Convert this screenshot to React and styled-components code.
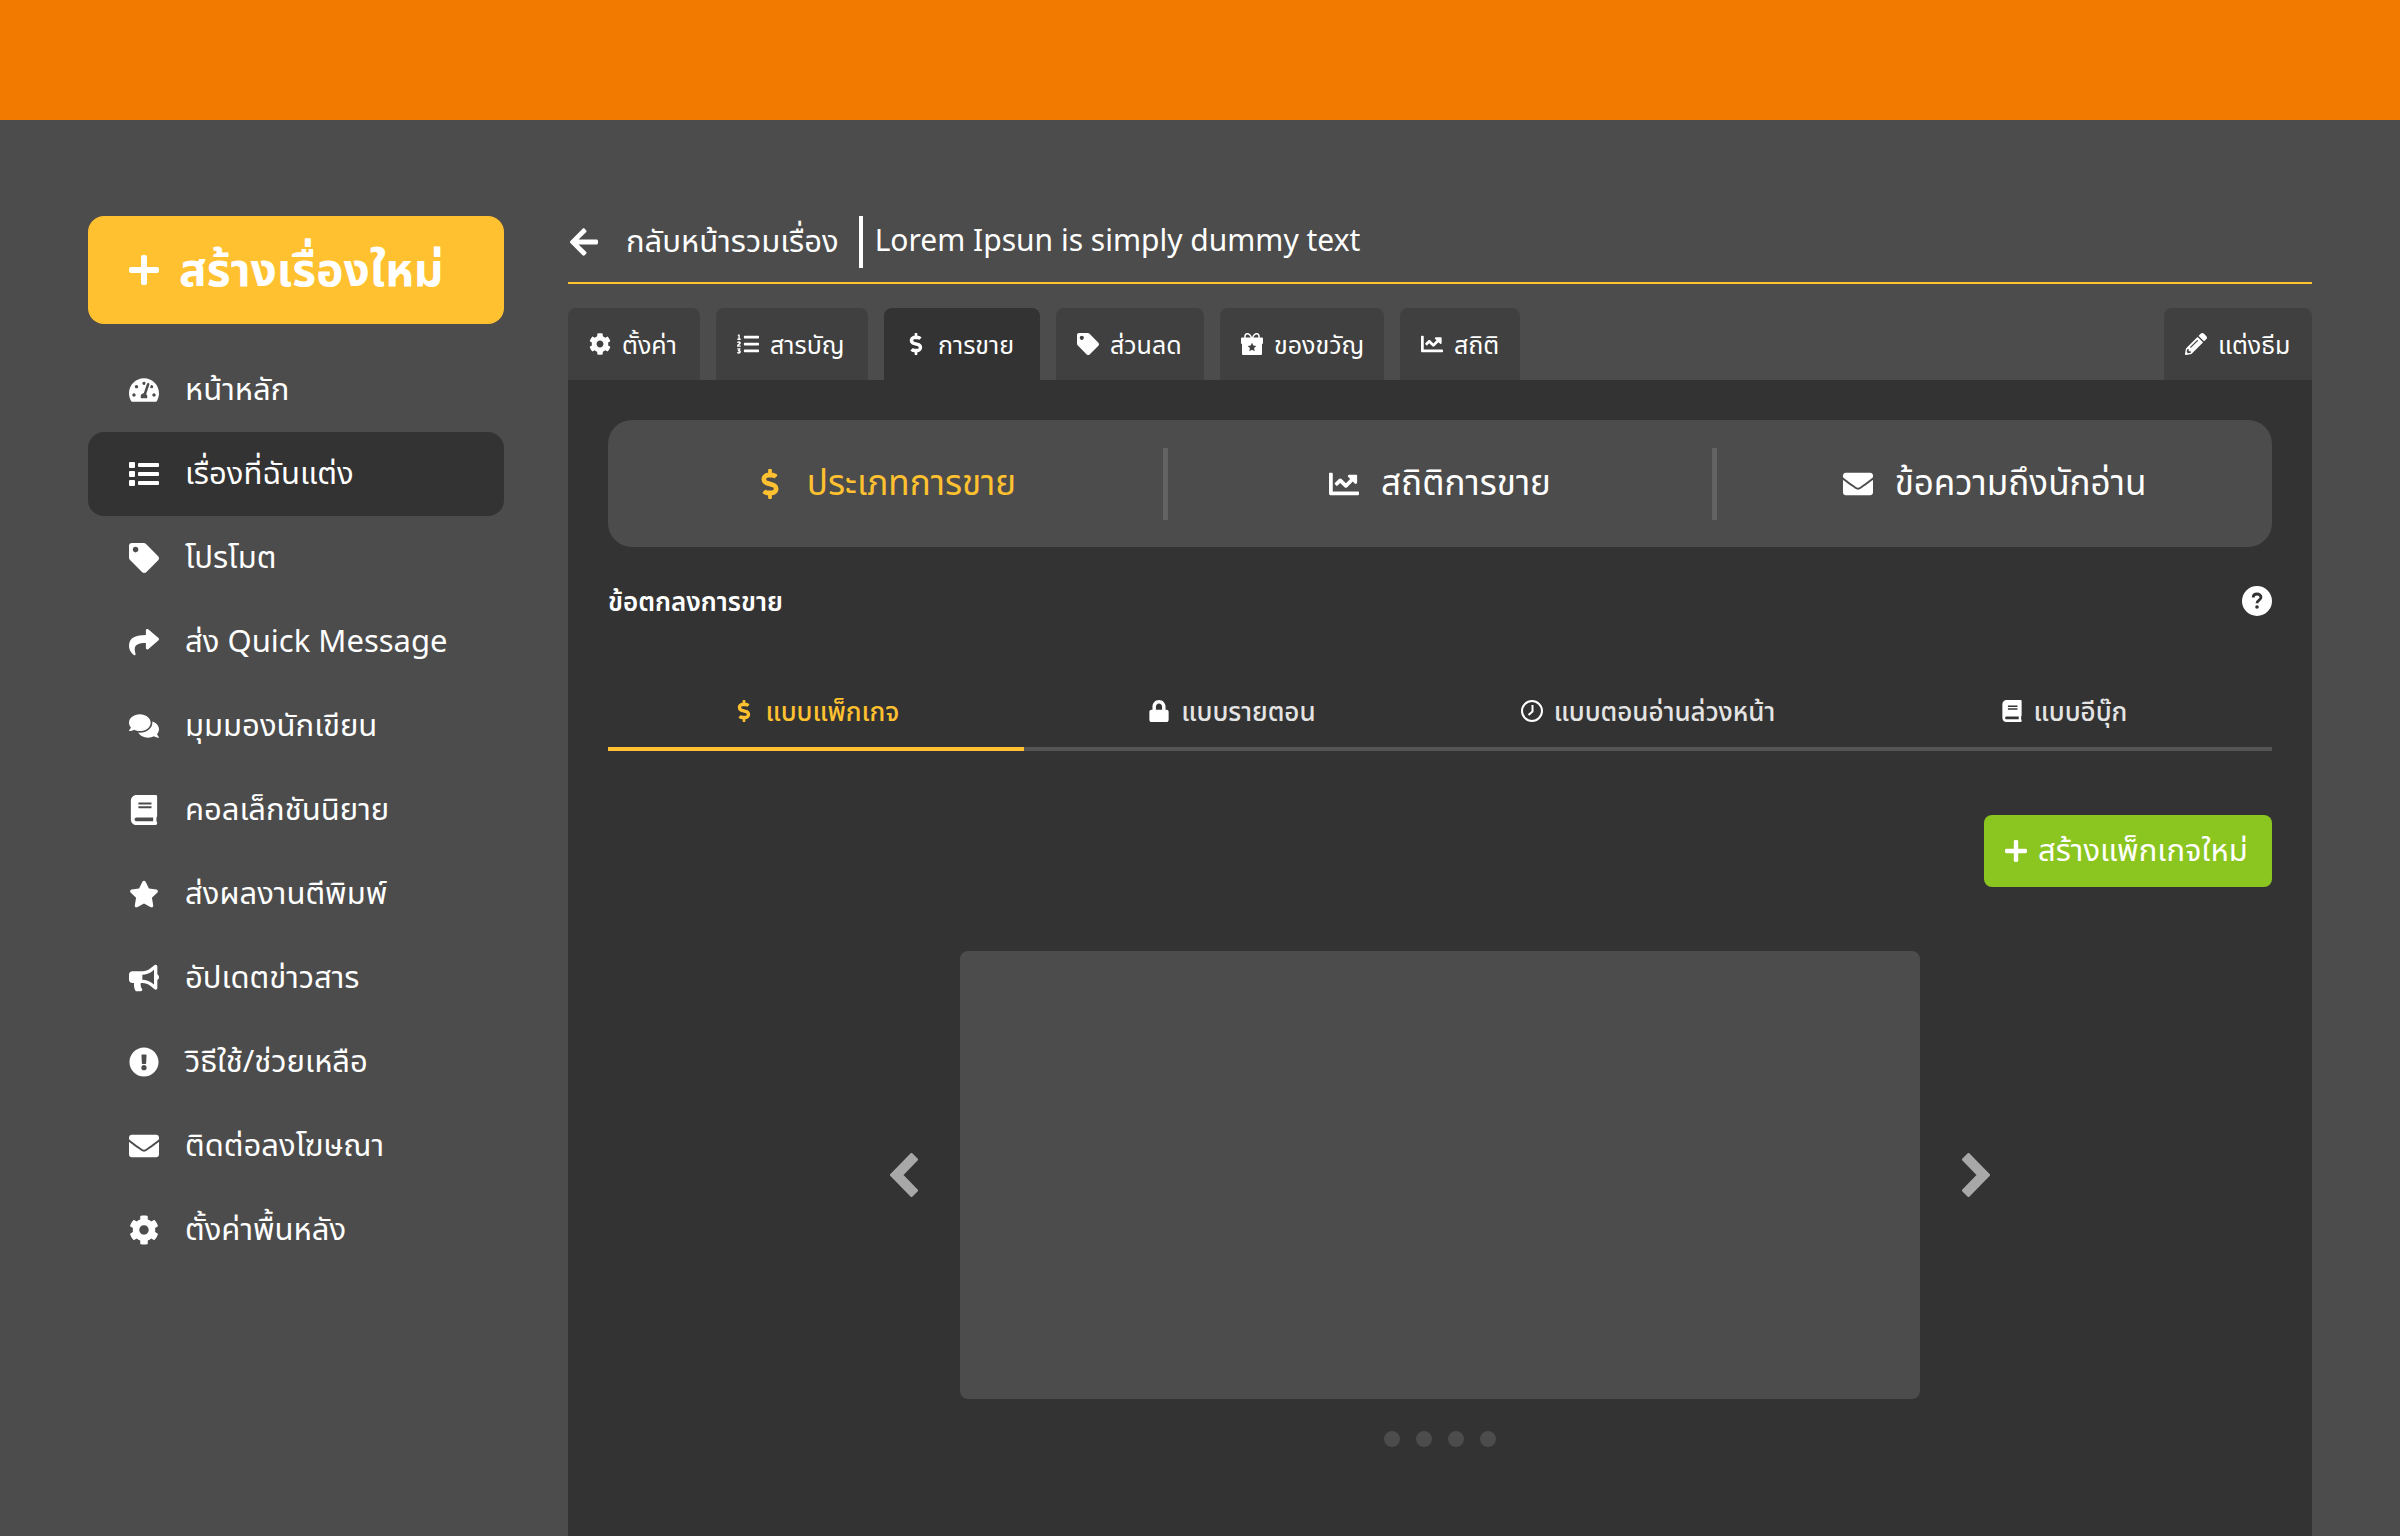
import React from "react";
import styled, { createGlobalStyle } from "styled-components";
import {
  FaTachometerAlt, FaTag, FaShare, FaComments, FaBook, FaStar, FaBullhorn,
  FaExclamationCircle, FaEnvelope, FaCog, FaArrowLeft, FaListOl, FaDollarSign,
  FaChartLine, FaPencilAlt, FaLock,
} from "react-icons/fa";

const color = {
  orange: "#f27a00",
  page: "#4c4c4c",
  panel: "#333333",
  tab: "#404040",
  yellow: "#ffc12f",
  green: "#8bc520",
  line: "#555555",
  divider: "#636363",
  arrow: "#a8a8a8",
  white: "#ffffff",
  soft: "#e4e4e4",
};

const GlobalStyle = createGlobalStyle`
  *, *::before, *::after { box-sizing: border-box; }
  body {
    margin: 0;
    background: ${color.page};
    color: ${color.white};
    font-family: "Noto Sans", "Noto Sans Thai", "Open Sans", sans-serif;
  }
  h1, h2, p { margin: 0; }
  a { color: inherit; text-decoration: none; }
  button { border: 0; padding: 0; background: none; color: inherit; font: inherit; cursor: pointer; }
  svg { display: block; flex: none; }
`;

const Page = styled.div`
  min-height: 100vh;
  display: flex;
  flex-direction: column;
`;

const TopBar = styled.header`
  height: 120px;
  background: ${color.orange};
`;

const Body = styled.div`
  flex: 1;
  display: flex;
  gap: 64px;
  padding: 96px 88px 0;
`;

const Sidebar = styled.aside`
  width: 416px;
  flex: none;
`;

const Label = styled.span`
  padding-bottom: 4px;
`;

const CreateButton = styled.button`
  width: 100%;
  height: 108px;
  display: flex;
  align-items: center;
  gap: 20px;
  padding: 0 41px;
  border-radius: 16px;
  background: ${color.yellow};
  font-size: 46px;
  line-height: 60px;
  font-weight: 700;
  white-space: nowrap;
`;

const Menu = styled.nav`
  display: flex;
  flex-direction: column;
  margin-top: 24px;
`;

const MenuLink = styled.a`
  height: 84px;
  display: flex;
  align-items: center;
  gap: 26px;
  padding: 0 41px;
  border-radius: 16px;
  background: ${(p) => (p.$active ? color.panel : "transparent")};
  font-size: 31px;
  line-height: 40px;
  white-space: nowrap;
`;

const IconBox = styled.span`
  width: ${(p) => p.$size}px;
  height: ${(p) => p.$size}px;
  flex: none;
  display: flex;
  align-items: center;
  justify-content: center;
  svg { width: auto; height: 100%; max-width: 100%; }
`;

const Main = styled.main`
  flex: 1;
  min-width: 0;
  display: flex;
  flex-direction: column;
`;

const TitleBar = styled.div`
  display: flex;
  align-items: flex-start;
  height: 68px;
  border-bottom: 2px solid ${color.yellow};
  white-space: nowrap;
`;

const BackLink = styled.a`
  height: 52px;
  display: flex;
  align-items: center;
  gap: 26px;
  padding-right: 20px;
  border-right: 4px solid ${color.white};
  font-size: 31px;
  line-height: 48px;
`;

const StoryTitle = styled.h1`
  padding-left: 12px;
  font-size: 30px;
  line-height: 48px;
  font-weight: 400;
`;

const Tabs = styled.nav`
  display: flex;
  gap: 16px;
  margin-top: 24px;
`;

const Tab = styled.a`
  min-width: ${(p) => p.$width}px;
  height: 72px;
  display: flex;
  align-items: center;
  gap: 11px;
  padding-left: 21px;
  margin-left: ${(p) => (p.$end ? "auto" : "0")};
  border-radius: 8px 8px 0 0;
  background: ${(p) => (p.$active ? color.panel : color.tab)};
  font-size: 25px;
  line-height: 32px;
  white-space: nowrap;
`;

const Panel = styled.section`
  flex: 1;
  padding: 40px;
  background: ${color.panel};
`;

const Segments = styled.nav`
  display: grid;
  grid-template-columns: 555fr 5px 544fr 5px 555fr;
  align-items: center;
  height: 127px;
  border-radius: 24px;
  background: ${color.page};
`;

const Segment = styled.a`
  display: flex;
  align-items: center;
  justify-content: center;
  gap: 22px;
  color: ${(p) => (p.$active ? color.yellow : color.white)};
  font-size: 35px;
  line-height: 44px;
  white-space: nowrap;
`;

const Divider = styled.span`
  height: 72px;
  background: ${color.divider};
`;

const TermsRow = styled.div`
  display: flex;
  align-items: center;
  justify-content: space-between;
  height: 30px;
  margin-top: 39px;
`;

const TermsTitle = styled.h2`
  font-size: 26px;
  line-height: 32px;
  font-weight: 600;
`;

const TypeTabs = styled.nav`
  display: grid;
  grid-template-columns: repeat(4, 1fr);
  margin-top: 59px;
`;

const TypeTab = styled.a`
  height: 76px;
  display: flex;
  align-items: center;
  justify-content: center;
  gap: 11px;
  border-bottom: 4px solid ${(p) => (p.$active ? color.yellow : color.line)};
  color: ${(p) => (p.$active ? color.yellow : color.soft)};
  font-size: 26px;
  line-height: 32px;
  font-weight: 500;
  white-space: nowrap;
  svg { color: ${(p) => (p.$active ? color.yellow : color.white)}; }
`;

const Actions = styled.div`
  display: flex;
  justify-content: flex-end;
  margin-top: 64px;
`;

const AddButton = styled.button`
  min-width: 288px;
  height: 72px;
  display: flex;
  align-items: center;
  gap: 11px;
  padding: 0 21px;
  border-radius: 8px;
  background: ${color.green};
  font-size: 31px;
  line-height: 40px;
  white-space: nowrap;
`;

const Carousel = styled.div`
  display: flex;
  align-items: center;
  justify-content: center;
  gap: 42px;
  margin-top: 64px;
`;

const Arrow = styled.button`
  flex: none;
  color: ${color.arrow};
`;

const Slide = styled.div`
  flex: 0 1 960px;
  height: 448px;
  border-radius: 8px;
  background: ${color.page};
`;

const Dots = styled.div`
  display: flex;
  justify-content: center;
  gap: 16px;
  margin-top: 32px;
`;

const Dot = styled.button`
  width: 16px;
  height: 16px;
  border-radius: 50%;
  background: ${color.page};
`;

const PlusIcon = () => (
  <svg viewBox="0 0 30 30" fill="currentColor" aria-hidden="true">
    <rect x="12" y="0" width="6" height="30" rx="2" />
    <rect x="0" y="12" width="30" height="6" rx="2" />
  </svg>
);

const ListIcon = () => (
  <svg viewBox="0 0 30 30" fill="currentColor" aria-hidden="true">
    {[3, 12, 21].map((y) => (
      <React.Fragment key={y}>
        <rect x="0" y={y} width="6" height="6" rx="1" />
        <rect x="9" y={y + 1} width="21" height="4" rx="1" />
      </React.Fragment>
    ))}
  </svg>
);

const GiftIcon = () => (
  <svg viewBox="0 0 22 22" aria-hidden="true">
    <path d="M10.5 5C9.5 2 8 .8 6.300 .8S3.600 2.200 4 5M11.500 5C12.500 2 14 .8 15.700 .8S18.400 2.200 18 5" fill="none" stroke="currentColor" strokeWidth="1.500" />
    <path fillRule="evenodd" fill="currentColor" d="M1 4.500h20a1 1 0 0 1 1 1V10a1 1 0 0 1-1 1v10a1 1 0 0 1-1 1H2a1 1 0 0 1-1-1V11a1 1 0 0 1-1-1V5.500a1 1 0 0 1 1-1zM11 9.800l-1.300 2.800-3.100.400 2.300 2.100-.600 3.100 2.700-1.500 2.700 1.500-.600-3.100 2.300-2.100-3.100-.400z" />
  </svg>
);

const ClockIcon = () => (
  <svg viewBox="0 0 22 22" fill="none" stroke="currentColor" aria-hidden="true">
    <circle cx="11" cy="11" r="10" strokeWidth="2" />
    <path d="M11.500 5v6.500L7.500 15" strokeWidth="2" />
  </svg>
);

const HelpIcon = () => (
  <svg viewBox="0 0 30 30" aria-hidden="true">
    <circle cx="15" cy="15" r="15" fill="currentColor" />
    <path d="M11.200 11.500C11.200 9.300 12.800 8 15 8S19 9.300 19 11.300C19 14.200 15 14 15 17.300" fill="none" stroke={color.panel} strokeWidth="2.800" />
    <circle cx="15" cy="21" r="1.800" fill={color.panel} />
  </svg>
);

const Chevron = ({ right }) => (
  <svg width="28" height="44" viewBox="0 0 28 44" fill="currentColor" stroke="currentColor" strokeWidth="3" strokeLinejoin="round" aria-hidden="true">
    <path d={right ? "M6.500 1.500 26.500 22 6.500 42.500 1.500 37.500 16.500 22 1.500 6.500z" : "M21.500 1.500 1.500 22 21.500 42.500 26.500 37.500 11.500 22 26.500 6.500z"} />
  </svg>
);

const menu = [
  [FaTachometerAlt, "หน้าหลัก"],
  [ListIcon, "เรื่องที่ฉันแต่ง"],
  [FaTag, "โปรโมต"],
  [FaShare, "ส่ง Quick Message"],
  [FaComments, "มุมมองนักเขียน"],
  [FaBook, "คอลเล็กชันนิยาย"],
  [FaStar, "ส่งผลงานตีพิมพ์"],
  [FaBullhorn, "อัปเดตข่าวสาร"],
  [FaExclamationCircle, "วิธีใช้/ช่วยเหลือ"],
  [FaEnvelope, "ติดต่อลงโฆษณา"],
  [FaCog, "ตั้งค่าพื้นหลัง"],
];

const tabs = [
  [FaCog, "ตั้งค่า", 132],
  [FaListOl, "สารบัญ", 152],
  [FaDollarSign, "การขาย", 156],
  [FaTag, "ส่วนลด", 148],
  [GiftIcon, "ของขวัญ", 164],
  [FaChartLine, "สถิติ", 120],
  [FaPencilAlt, "แต่งธีม", 148],
];

const segments = [
  [FaDollarSign, "ประเภทการขาย"],
  [FaChartLine, "สถิติการขาย"],
  [FaEnvelope, "ข้อความถึงนักอ่าน"],
];

const types = [
  [FaDollarSign, "แบบแพ็กเกจ"],
  [FaLock, "แบบรายตอน"],
  [ClockIcon, "แบบตอนอ่านล่วงหน้า"],
  [FaBook, "แบบอีบุ๊ก"],
];

export default function App() {
  return (
    <Page>
      <GlobalStyle />
      <TopBar />
      <Body>
        <Sidebar>
          <CreateButton type="button">
            <IconBox $size={30}><PlusIcon /></IconBox>
            <Label>สร้างเรื่องใหม่</Label>
          </CreateButton>
          <Menu>
            {menu.map(([Icon, label], i) => (
              <MenuLink key={label} href="#" $active={i === 1}>
                <IconBox $size={30}><Icon /></IconBox>
                <Label>{label}</Label>
              </MenuLink>
            ))}
          </Menu>
        </Sidebar>
        <Main>
          <TitleBar>
            <BackLink href="#">
              <IconBox $size={32}><FaArrowLeft /></IconBox>
              <Label>กลับหน้ารวมเรื่อง</Label>
            </BackLink>
            <StoryTitle>Lorem Ipsun is simply dummy text</StoryTitle>
          </TitleBar>
          <Tabs>
            {tabs.map(([Icon, label, width], i) => (
              <Tab key={label} href="#" $width={width} $active={i === 2} $end={i === 6}>
                <IconBox $size={22}><Icon /></IconBox>
                {label}
              </Tab>
            ))}
          </Tabs>
          <Panel>
            <Segments>
              {segments.map(([Icon, label], i) => (
                <React.Fragment key={label}>
                  {i > 0 && <Divider />}
                  <Segment href="#" $active={i === 0}>
                    <IconBox $size={30}><Icon /></IconBox>
                    <Label>{label}</Label>
                  </Segment>
                </React.Fragment>
              ))}
            </Segments>
            <TermsRow>
              <TermsTitle>ข้อตกลงการขาย</TermsTitle>
              <button type="button" aria-label="ช่วยเหลือ">
                <IconBox $size={30}><HelpIcon /></IconBox>
              </button>
            </TermsRow>
            <TypeTabs>
              {types.map(([Icon, label], i) => (
                <TypeTab key={label} href="#" $active={i === 0}>
                  <IconBox $size={22}><Icon /></IconBox>
                  {label}
                </TypeTab>
              ))}
            </TypeTabs>
            <Actions>
              <AddButton type="button">
                <IconBox $size={22}><PlusIcon /></IconBox>
                <Label>สร้างแพ็กเกจใหม่</Label>
              </AddButton>
            </Actions>
            <Carousel>
              <Arrow type="button" aria-label="ก่อนหน้า"><Chevron /></Arrow>
              <Slide />
              <Arrow type="button" aria-label="ถัดไป"><Chevron right /></Arrow>
            </Carousel>
            <Dots>
              {[1, 2, 3, 4].map((n) => (
                <Dot key={n} type="button" aria-label={`หน้า ${n}`} />
              ))}
            </Dots>
          </Panel>
        </Main>
      </Body>
    </Page>
  );
}
